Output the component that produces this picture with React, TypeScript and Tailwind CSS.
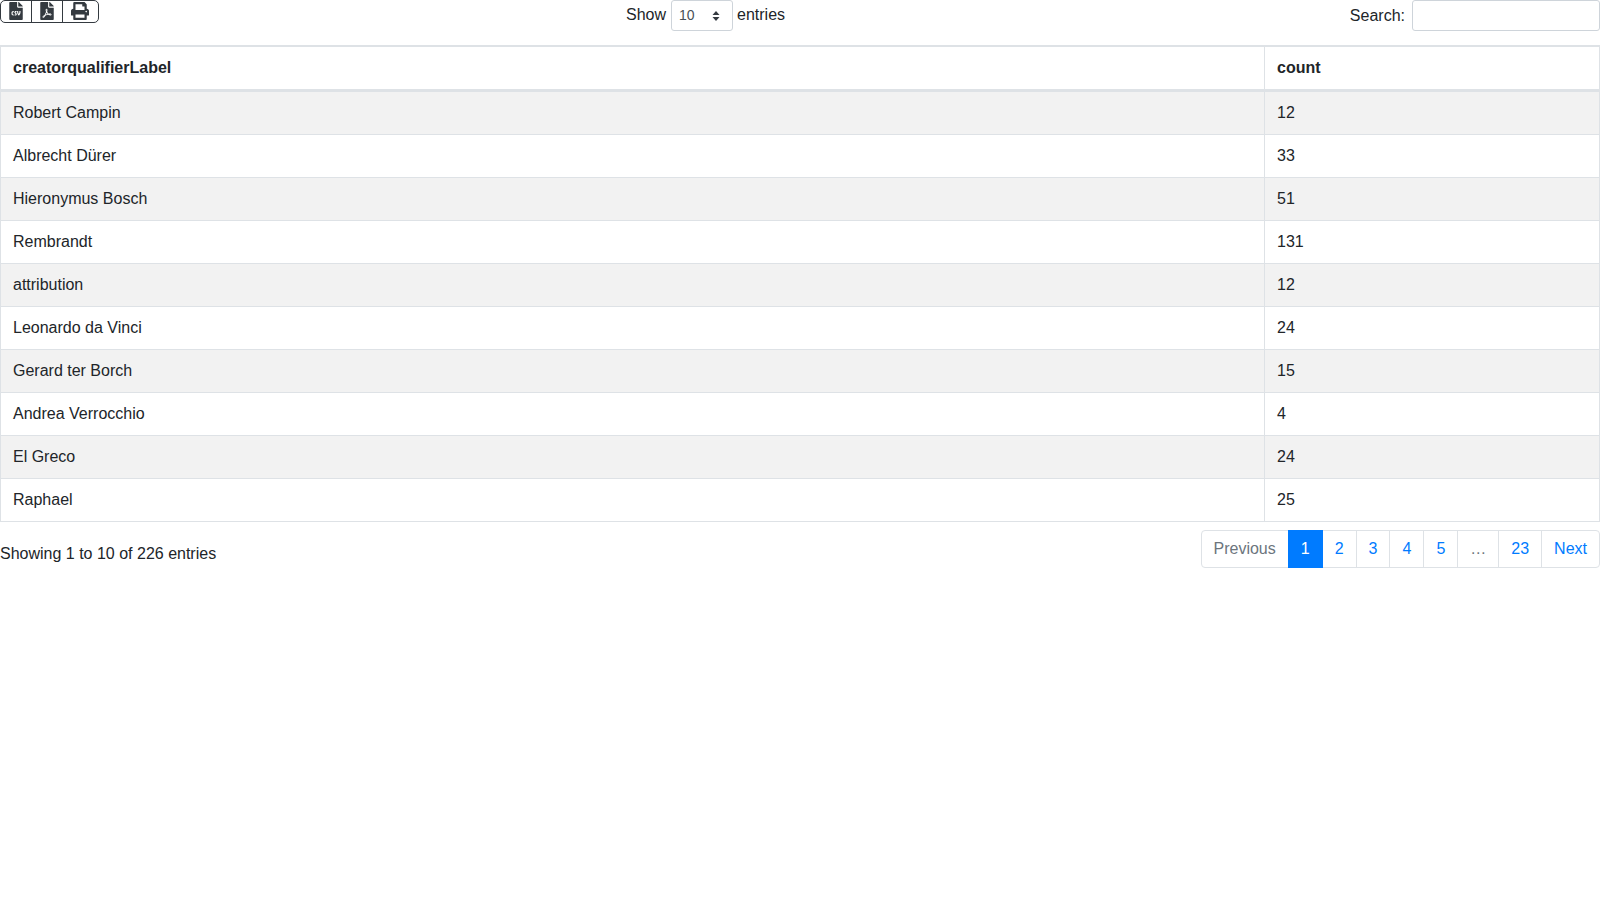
import { FaFileCsv, FaFilePdf, FaPrint } from 'react-icons/fa'

const rows = [
  ['Robert Campin', '12'],
  ['Albrecht Dürer', '33'],
  ['Hieronymus Bosch', '51'],
  ['Rembrandt', '131'],
  ['attribution', '12'],
  ['Leonardo da Vinci', '24'],
  ['Gerard ter Borch', '15'],
  ['Andrea Verrocchio', '4'],
  ['El Greco', '24'],
  ['Raphael', '25'],
]

const pages = ['2', '3', '4', '5']

const App = () => {
  return (
    <div className="min-h-[900px] bg-white font-['Liberation_Sans',Arial,sans-serif] text-base leading-6 text-[#212529]">
      <div className="flex h-[45px] items-start">
        <div className="w-[626px]">
          <div className="flex h-[23px] w-[99px] overflow-hidden rounded-[5px] border border-[#343a40] text-[#343a40]">
            <div className="flex w-[31px] justify-center border-r border-[#343a40] pt-px">
              <FaFileCsv size={18} />
            </div>
            <div className="flex w-[31px] justify-center border-r border-[#343a40] pt-px">
              <FaFilePdf size={18} />
            </div>
            <div className="flex flex-1 justify-center pt-px pr-px">
              <FaPrint size={18} />
            </div>
          </div>
        </div>
        <div className="flex items-center">
          <span className="mb-[2px]">Show</span>
          <div className="ml-[5px] mr-1 flex h-[31px] w-[62px] items-center justify-between rounded-[3px] border border-[#ced4da] pl-[7px] pr-3 text-sm text-[#495057]">
            <span className="mb-px">10</span>
            <svg width="8" height="12" viewBox="0 0 8 12">
              <path d="M4 1 L7.5 5 H0.5 Z M0.5 7 H7.5 L4 11 Z" fill="#343a40" />
            </svg>
          </div>
          <span className="mb-[2px]">entries</span>
        </div>
        <div className="flex flex-1 items-center justify-end">
          <span>Search:</span>
          <input className="ml-[7px] h-[31px] w-[188px] rounded-[3px] border border-[#ced4da] bg-white" />
        </div>
      </div>

      <table className="w-full table-fixed border-collapse">
        <thead>
          <tr>
            <th className="h-[44px] w-[1264px] border border-t-2 border-b-[3px] border-[#dee2e6] px-3 text-left font-bold">creatorqualifierLabel</th>
            <th className="h-[44px] border border-t-2 border-b-[3px] border-[#dee2e6] px-3 text-left font-bold">count</th>
          </tr>
        </thead>
        <tbody>
          {rows.map((row, i) => (
            <tr key={row[0]} className={i % 2 === 0 ? 'bg-[#f2f2f2]' : 'bg-white'}>
              <td className={`border border-[#dee2e6] px-3 ${i === 0 ? 'h-[44px]' : 'h-[43px]'}`}>{row[0]}</td>
              <td className={`border border-[#dee2e6] px-3 ${i === 0 ? 'h-[44px]' : 'h-[43px]'}`}>{row[1]}</td>
            </tr>
          ))}
        </tbody>
      </table>

      <div className="mt-2 flex items-start justify-between">
        <div className="pt-3">Showing 1 to 10 of 226 entries</div>
        <ul className="flex h-[38px]">
          <li className="rounded-l-[4px] border border-[#dee2e6] px-3 py-[6px] text-[#6c757d]">Previous</li>
          <li className="relative z-10 -ml-px border border-[#007bff] bg-[#007bff] px-3 py-[6px] text-white">1</li>
          {pages.map((p) => (
            <li key={p} className="-ml-px border border-[#dee2e6] px-3 py-[6px] text-[#007bff]">{p}</li>
          ))}
          <li className="-ml-px border border-[#dee2e6] px-3 py-[6px] text-[#6c757d]">…</li>
          <li className="-ml-px border border-[#dee2e6] px-3 py-[6px] text-[#007bff]">23</li>
          <li className="-ml-px rounded-r-[4px] border border-[#dee2e6] px-3 py-[6px] text-[#007bff]">Next</li>
        </ul>
      </div>
    </div>
  )
}

export default App
